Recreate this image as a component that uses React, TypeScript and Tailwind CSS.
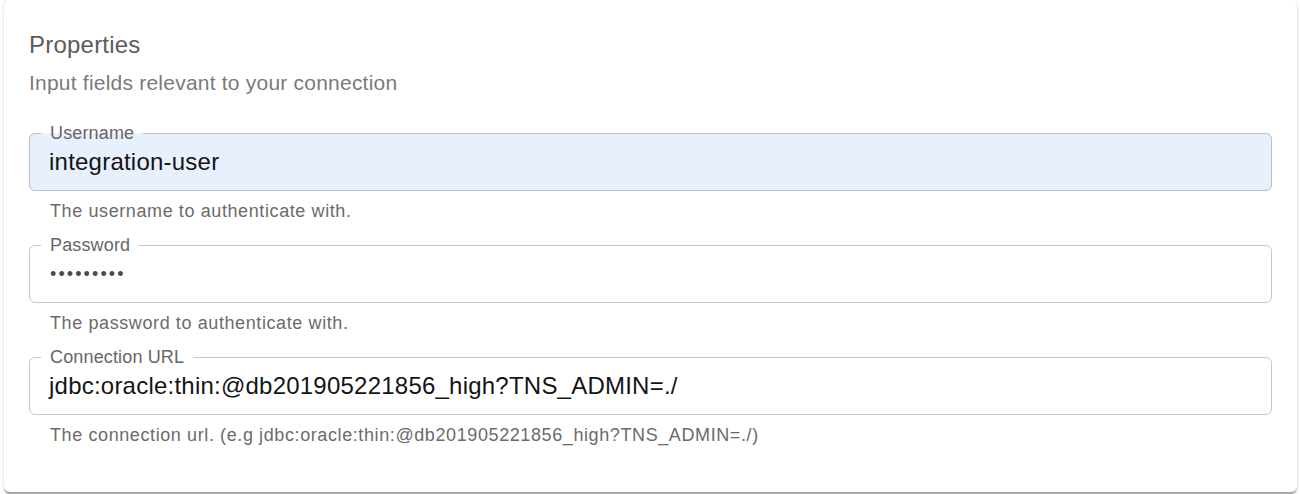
import React from "react";

type Field = {
  label: string;
  value: string;
  helper: string;
  autofill?: boolean;
  secret?: boolean;
};

const fields: Field[] = [
  {
    label: "Username",
    value: "integration-user",
    helper: "The username to authenticate with.",
    autofill: true,
  },
  {
    label: "Password",
    value: "•••••••••",
    helper: "The password to authenticate with.",
    secret: true,
  },
  {
    label: "Connection URL",
    value: "jdbc:oracle:thin:@db201905221856_high?TNS_ADMIN=./",
    helper: "The connection url. (e.g jdbc:oracle:thin:@db201905221856_high?TNS_ADMIN=./)",
  },
];

function OutlinedField({ field }: { field: Field }) {
  return (
    <div className="mt-[19px] first:mt-[35px]">
      <div
        className={
          field.autofill
            ? "relative h-[58px] rounded-[6px] bg-[#e8f0fe] flex items-center pl-[20px]"
            : "relative h-[58px] rounded-[6px] bg-white flex items-center pl-[20px]"
        }
      >
        {/* notched outline */}
        <fieldset
          className={
            field.autofill
              ? "absolute left-0 right-0 top-[-9px] bottom-0 m-0 px-[11px] rounded-[6px] border border-[#b7bfcc] pointer-events-none"
              : "absolute left-0 right-0 top-[-9px] bottom-0 m-0 px-[11px] rounded-[6px] border border-[#c8c8c8] pointer-events-none"
          }
        >
          <legend className="px-[9px] text-[18px] leading-[18px] tracking-[0.15px] text-[#666666]">
            {field.label}
          </legend>
        </fieldset>
        {field.secret ? (
          <span className="relative pl-[1px] text-[18px] leading-[24px] tracking-[2.1px] text-[#4a4a4a]">
            {field.value}
          </span>
        ) : (
          <span className="relative text-[24px] leading-[24px] tracking-[0.225px] text-[#141414]">
            {field.value}
          </span>
        )}
      </div>
      <p className="mt-[5px] ml-[21px] text-[18px] leading-[30px] tracking-[0.6px] text-[#6b6b6b]">
        {field.helper}
      </p>
    </div>
  );
}

export default function App() {
  return (
    <div
      className="bg-white min-h-[494px] pl-[4px]"
      style={{ fontFamily: '"Liberation Sans", Arial, sans-serif' }}
    >
      <div className="w-[1293px] h-[492px] bg-white rounded-[6px] shadow-[0_3px_1.5px_-1.5px_rgba(0,0,0,0.2),0_1.5px_1.5px_0_rgba(0,0,0,0.14),0_1.5px_4.5px_0_rgba(0,0,0,0.12)] px-[25px] pt-[27px]">
        <h2 className="text-[24px] leading-[36px] tracking-[0.22px] text-[#5c5c5c] font-normal">
          Properties
        </h2>
        <p className="mt-[5px] text-[21px] leading-[30px] tracking-[0.22px] text-[#7a7a7a]">
          Input fields relevant to your connection
        </p>
        <div className="flex flex-col">
          {fields.map((f) => (
            <OutlinedField key={f.label} field={f} />
          ))}
        </div>
      </div>
    </div>
  );
}
